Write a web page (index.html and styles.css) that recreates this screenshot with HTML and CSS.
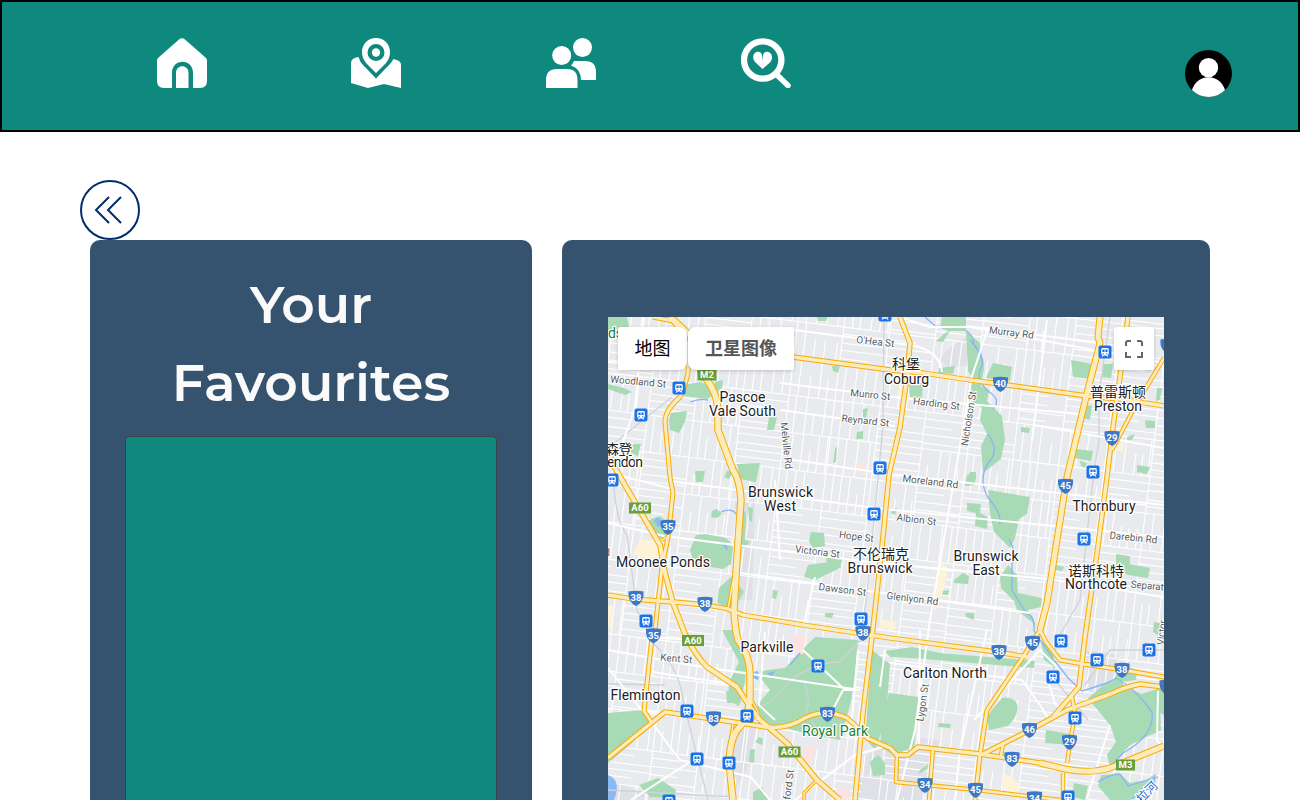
FILE: index.html
```html
<!DOCTYPE html>
<html lang="en">
<head>
<meta charset="utf-8">
<title>Your Favourites</title>
<link rel="stylesheet" href="styles.css">
</head>
<body>
<header class="navbar">
  <nav class="nav-links">
    <a class="nav-link"><svg class="nav-icon" viewBox="0 0 50 50"><path d="M22 1.500Q25-1 28 1.500L49 20Q50 21 50 22.500V43Q50 50 43 50H36V35C36 20 15 20 15 35V50H7Q0 50 0 43V22.500Q0 21 1 20Z"/><path d="M19 50V35C19 26 31.500 26 31.500 35V50Z"/></svg></a>
    <a class="nav-link"><svg class="nav-icon" viewBox="0 0 50 50"><path fill-rule="evenodd" d="M25 0C17 0 11 6 11 14Q11 20 15 25L25 35L35 25Q39 20 39 14C39 6 33 0 25 0ZM25 6A8.500 8.500 0 1 1 25 23A8.500 8.500 0 1 1 25 6Z"/><circle cx="25" cy="14.500" r="4.200"/><path d="M7.500 19Q9 24 12 27L25 40.500L38 27Q41 24 42.500 21L47 22.500Q50 24 50 27V50L33 46L17 50L0 45V25Q0 20 7.500 19Z"/></svg></a>
    <a class="nav-link"><svg class="nav-icon" viewBox="0 0 50 50"><circle cx="36.500" cy="9.500" r="9.500"/><circle cx="15.700" cy="17.500" r="9.500"/><path d="M0 50V42Q0 31 11 31H21Q31.500 31 31.500 42V50ZM28 23H39Q50 23 50 34V42H35Q35 31 25 27.500Q27 25.500 28 23Z"/></svg></a>
    <a class="nav-link"><svg class="nav-icon" viewBox="0 0 50 50"><circle cx="21.700" cy="22" r="18.700" fill="none" stroke="#fff" stroke-width="6.300"/><path d="M35 36L47 47.500" stroke="#fff" stroke-width="5.500" stroke-linecap="round"/><path d="M21.500 31L14 24C8 15 19 10 21 17L21.500 23L22 17C24 10 35 15 29.500 24Z"/></svg></a>
  </nav>
  <svg class="avatar" viewBox="0 0 47 47"><defs><clipPath id="disc"><circle cx="23.500" cy="23.500" r="23.500"/></clipPath></defs><circle cx="23.500" cy="23.500" r="23.500"/><g clip-path="url(#disc)" fill="#fff"><circle cx="23.500" cy="17.700" r="9.700"/><path d="M6 47C6 20.500 41 20.500 41 47Z"/></g></svg>
</header>
<main class="page">
  <svg class="back" viewBox="0 0 60 60"><circle cx="30" cy="30" r="29"/><path d="M29 17L16 30L29 43M41 17L28 30L41 43"/></svg>
  <div class="columns">
    <section class="panel favourites">
      <h1 class="title">Your Favourites</h1>
      <div class="list"></div>
    </section>
    <section class="panel map-panel">
      <div class="map">
        <svg id="map" class="map-canvas" viewBox="608 317 556 483"></svg>
        <div class="map-types"><button class="type active">地图</button><button class="type satellite">卫星图像</button></div>
        <button class="fullscreen" aria-label="Fullscreen"><svg viewBox="0 0 18 18"><path d="M1 6V3Q1 1 3 1H6M12 1H15Q17 1 17 3V6M17 12V17H12M6 17H1V12"/></svg></button>
      </div>
    </section>
  </div>
</main>
<script src="map.js"></script>
</body>
</html>
```
FILE: styles.css
```css
*{box-sizing:border-box}
body{margin:0;height:800px;overflow:hidden;background:#fff;font-family:"Noto Sans","Noto Sans CJK SC",sans-serif}
.navbar{display:flex;justify-content:space-between;height:132px;padding:36px 66px 0 155px;border:2px solid #000;background:#0f897d}
.nav-links{display:flex;gap:144.400px}
.nav-link:last-child{margin-left:.600px}
.nav-icon{display:block;width:50px;height:50px;fill:#fff}
.avatar{width:47px;height:47px;margin-top:12px}
.page{padding:48px 80px 0}
.back{display:block;width:60px;height:60px;fill:none;stroke:#002d6b;stroke-width:2}
.columns{display:flex;gap:30px;padding:0 10px}
.panel{height:560px;border-radius:10px 10px 0 0;background:#35526f}
.favourites{width:442px;padding:26px 35px 0}
.title{margin:0;padding:0 40px;color:#fafafa;font:600 52px/78px Montserrat,Inter,sans-serif;text-align:center}
.list{height:364px;margin-top:14px;border:1px solid #3a4348;border-bottom:0;border-radius:5px 5px 0 0;background:#0f897d}
.map-panel{width:648px;padding:77px 46px 0}
.map{position:relative;height:483px;overflow:hidden;background:#e8eaed}
.map-canvas{display:block;width:556px;height:483px}
.map-types{position:absolute;left:10px;top:10px;display:flex;gap:1px}
.type{height:43px;padding:0 0 3px;border:0;background:#fff;box-shadow:0 1px 4px -1px rgba(0,0,0,.3);font:18px "Noto Sans CJK SC",sans-serif}
.active{width:69px;border-radius:2px 8px 8px 2px;color:#000}
.satellite{width:106px;border-radius:8px 2px 2px 8px;color:#565656;font-weight:700}
.fullscreen{position:absolute;right:10px;top:10px;display:flex;align-items:center;justify-content:center;width:40px;height:43px;padding:0;border:0;border-radius:2px;background:#fff;box-shadow:0 1px 4px -1px rgba(0,0,0,.3)}
.fullscreen svg{width:18px;height:18px;fill:none;stroke:#666;stroke-width:2}
.map-canvas text{font-family:Roboto,"Noto Sans CJK SC",sans-serif;text-anchor:middle}
.place{font-size:14px;fill:#202124;stroke:#fff;stroke-width:2.500px;stroke-linejoin:round;paint-order:stroke}
.map-canvas .park-name{fill:#188038}
.map-canvas .water-name{font-size:12px;fill:#1a66c9}
.street-name{font-size:10px;fill:#55595d;stroke:#fff;stroke-width:2px;stroke-linejoin:round;paint-order:stroke}
.badge{font-size:9.500px;font-weight:700;fill:#fff}
.park{fill:#a8dab5}
.zone{fill:#dfe1e6}
.shops{fill:#fdf3d8}
.medical{fill:#fbe3e1}
.lake{fill:#8ab9f8}
.creek{fill:none;stroke:#8ab4f8;stroke-width:1.300}
.rail{fill:none;stroke:#cfd2d7;stroke-width:1.300}
.minor{fill:none;stroke:#fff;stroke-width:1.100}
.collector{fill:none;stroke:#fff;stroke-width:2;stroke-linejoin:round}
.casing{fill:none;stroke:#f9ab00;stroke-linejoin:round}
.road{fill:none;stroke:#fdebb8;stroke-linejoin:round}
```
FILE: map.js
```js
const svg = document.getElementById('map');
let out = '';
const draw = (cls, list, close) => list.forEach(p => out += `<path class="${cls}" d="M${p}${close ? 'Z' : ''}"/>`);

draw('zone', [
  '945 352L966 337L970 365L950 368L940 360', '735 500L755 500L752 600L739 600', '890 735L940 740L925 800L855 800L865 758',
  '733 720L757 725L747 770L735 790L728 765', '1085 650L1118 655L1108 700L1090 695', '608 780L650 795L670 800L608 800'
], true);

// Residential blocks: each cell is filled with closely spaced lanes in one direction.
let seed = 11;
const rnd = () => (seed = (seed * 16807) % 2147483647) / 2147483647;
let lanes = '';
for (let y = 260; y < 880; y += 37) {
  for (let x = 540; x < 1240; x += 46) {
    const vertical = x < 1010 ? rnd() < 0.68 : rnd() < 0.25;
    lanes += `M${x} ${y}h46M${x} ${y}v37`;
    if (vertical) for (let i = 7 + rnd() * 2; i < 45; i += 7 + rnd() * 5) lanes += `M${x + i} ${y + (rnd() < .3 ? 16 : 0)}V${y + 37}`;
    else for (let i = 7; i < 36; i += 6.5 + rnd() * 3) lanes += `M${x} ${y + i}h${rnd() < .25 ? 28 : 46}`;
  }
}
out += `<path class="minor" transform="rotate(7 886 558)" d="${lanes}"/>`;

draw('park', [
  '608 317L627 317L629 327L608 333', '608 384L624 388L632 392L625 395L608 389', '628 444L641 444L638 456L629 452',
  '671 413L687 411L685 422L679 433L670 430L669 420', '683 385L700 382L720 390L707 399L684 396', '715 382L723 380L722 388L714 392',
  '737 464L760 463L756 482L740 479', '769 417L777 417L774 430L767 430', '695 471L705 471L703 482L696 482', '727 471L733 471L729 479L724 477',
  '748 507L753 508L752 522L749 520', '712 511L717 509L722 514L717 518L711 517', '743 513L746 511L745 540L750 542L744 548L739 547',
  '651 519L660 516L666 521L671 536L661 540L648 522', '696 535L705 534L726 538L733 545L731 564L723 569L694 564L690 550',
  '719 588L732 576L740 587L744 592L737 604L727 607L717 603', '811 532L824 533L825 546L813 548L809 541',
  '808 565L830 562L843 559L838 569L815 580L804 577', '826 557L840 560L841 568L827 564', '825 613L834 613L832 618L825 617', '773 590L778 591L776 599L772 598',
  '817 317L828 317L826 321L818 321', '832 366L840 365L838 373L833 371', '863 409L868 408L866 418L863 417', '857 432L863 431L863 439L856 439', '837 446L836 462L833 463L835 449',
  '939 368L955 366L953 374L938 373', '909 383L923 383L922 398L910 397', '942 317L966 317L966 331L948 331L940 327',
  '945 333L950 331L943 342L936 341', '966 331L980 343L984 369L980 389L968 371', '993 363L1012 367L1010 381L986 378',
  '970 381L989 390L987 401L1002 416L1005 440L1001 459L983 473L981 446L987 434L980 420L982 408L973 402', '970 472L976 472L976 479L968 477', '1021 427L1030 428L1029 433L1021 432',
  '1071 360L1092 364L1090 379L1073 377', '1103 364L1113 364L1111 378L1102 377', '1075 449L1093 451L1091 461L1074 458', '1080 461L1087 463L1085 468L1081 466',
  '1145 420L1155 421L1155 428L1146 428', '1137 465L1150 467L1147 474L1137 472', '1127 437L1135 434L1132 440L1127 440', '1086 405L1092 406L1090 420L1083 418', '1157 388L1162 388L1160 400L1156 401',
  '967 475L976 473L975 485L965 486', '988 490L1030 497L1027 514L1019 519L1015 538L1010 548L994 532L990 513', '967 503L981 504L980 513L988 517L987 529L975 526L976 513L967 511',
  '954 580L963 573L969 576L968 584L954 583', '965 613L974 613L974 620L966 617', '942 591L949 590L948 595L943 595', '892 510L897 508L895 515L891 513', '1056 565L1064 567L1062 571L1056 570',
  '1008 565L1017 575L1018 593L1042 598L1041 607L1028 610L1036 625L1028 619L1017 610L1014 601L1001 588L1000 577', '1116 554L1130 556L1130 564L1150 568L1148 578L1128 575L1116 568', '1154 622L1161 623L1158 635L1153 632',
  '760 671L785 668L795 657L815 637L858 640L855 675L851 702L840 740L800 732L762 722L757 705L770 690L762 680', '872 650L890 664L886 718L875 750L865 738',
  '722 630L735 630L747 655L745 682L739 706L728 700L729 682L739 662', '726 691L739 692L741 703L727 703', '608 713L645 710L650 724L608 758', '608 758L634 734L643 726L632 743L608 763', '639 785L658 778L676 790L674 798L650 797',
  '750 750L755 749L754 763L749 762', '759 737L763 739L762 745L755 742', '870 762L878 755L885 763L885 775L873 776', '753 792L762 787L768 800L753 800',
  '889 693L919 697L914 747L894 755L880 747L882 720', '885 651L912 647L940 653L1035 661L1034 668L912 658L890 657', '1002 698C1022 695 1021 714 1008 726L989 730L987 716',
  '1046 730L1075 735L1072 745L1045 743', '1088 698L1105 684L1120 679L1126 688L1145 695L1160 700L1161 730L1130 745L1110 767L1107 755L1116 742L1110 725', '1120 664L1137 670L1136 680L1113 683',
  '1138 695L1164 687L1164 715L1155 710', '1101 775L1120 774L1130 783L1146 780L1156 774L1155 786L1130 800L1110 800L1098 786', '939 723L951 724L950 728L938 727', '1074 783L1088 786L1085 800L1072 797', '1041 640L1052 650L1056 668L1044 660', '920 770L929 764L926 770L918 774'
], true);
draw('shops', [
  '640 539L656 541L661 561L633 555', '893 370L905 377L904 397L898 397L899 384L891 378', '938 560L948 568L945 585L936 612L932 607L936 580',
  '880 620L896 621L895 630L880 628', '1118 445L1124 442L1123 452L1117 450', '1004 774L1012 777L1020 785L1018 796L1003 793', '608 605L613 605L611 628L608 628', '912 781L928 784L926 788L912 786'
], true);
draw('medical', ['858 463L866 464L864 470L857 469', '792 635L806 634L803 655L790 649', '804 748L817 744L812 763L806 768L802 760', '837 787L850 790L850 800L838 797'], true);
draw('lake', ['654 521Q659 513 662 526L658 527', '721 542Q729 544 727 551', '754 672Q761 668 758 680L753 678', '767 673L776 671L771 677', '608 775Q622 780 614 800L608 800'], true);
draw('creek', [
  '925 317L935 326L944 328', '965 330Q974 335 974 345Q983 355 983 365', '970 340Q984 355 982 366Q974 378 988 391Q1002 400 993 409', '988 434Q998 449 992 458Q977 475 987 496Q1004 517 999 524',
  '1009 539Q1018 556 1012 564V590L1026 613Q1035 615 1034 631L1054 660L1069 679L1082 691Q1113 682 1116 678Q1135 688 1152 712Q1155 735 1123 753L1111 766', '690 402Q700 398 708 400', '721 512Q732 507 737 515', '800 653L790 665', '1098 782Q1110 774 1120 774L1128 786L1158 777M1154 775V786L1132 799'
]);
draw('rail', [
  '884 317L883 425L878 480L866 602L860 640', '608 448L672 397', '613 474Q615 520 627 535L637 610L655 645Q680 670 683 700L708 800', '1110 317L1099 395V440L1093 480L1080 600L1060 635Q1050 660 1055 680L1088 720', '763 706Q781 695 790 680Q815 662 840 662L866 634', '803 680Q812 700 806 711L820 735M1085 685L1110 650H1164', '608 684L665 685M608 790L735 797'
]);
draw('collector', [
  '608 362L688 369', '608 473L673 489', '620 450L635 408L644 317', '608 523L664 536L870 562L1048 579L1164 597', '670 481L883 509L1164 537', '740 573L890 594L1030 613', '794 330L910 345Q940 350 942 372',
  '780 383L902 398L1080 414', '780 410L895 426', '900 317L930 327H970L1095 342', '787 459L889 474L1164 505', '970 327L1164 363', '988 328L972 376L930 620L915 730L897 800', '1047 320L1032 440', '1034 425L1164 448', '608 650L690 665L860 690',
  '652 637L690 640M653 672L730 684', '608 668L652 723L680 760L751 777L770 800', '631 800L690 762M645 711L713 719', '765 632L759 705L775 720', '803 650L845 690H858M843 690L830 715', '885 650L880 687M987 630L960 750L955 800', '1048 680L1055 704L1065 711',
  '890 663L1022 680L1040 705L1048 718', '890 745L855 755L795 800', '858 650L851 730M920 630L919 745', '815 577L803 628M775 480L780 560M725 770L733 790', '974 720L1040 650L1058 668', '1158 691L1157 740L1164 750M1087 798L1110 725'
]);

// Arterial roads: [width, path]; all casings are painted before the fills so junctions merge.
const roads = [
  [5, '653 317L673 321L682 333L688 345V373Q685 387 680 397Q665 410 665 422L670 477L673 493L668 537L662 567L655 630L652 637L644 711L652 723'],
  [7.5, '670 317L692 337L701 372L707 380Q717 393 718 410V430L733 470Q740 480 741 500L737 557L734 610Q735 630 738 640Q750 655 750 675V697Q748 720 737 730Q730 740 729 763L733 800'],
  [6, '608 450L615 468L660 545L665 573L673 603L685 634Q695 655 707 667L737 687L750 707L760 720L787 743L817 780L840 800'],
  [5.3, '608 595L633 599L673 602L707 605L728 609L743 615L803 625L890 638L997 652L1027 657'], [3.5, '728 609L735 570M662 540L668 537M733 724L727 763M817 780L804 793V800M750 697L758 712L756 720'],
  [5.5, '900 317L910 343L907 377L900 427L889 475L883 537L872 637L863 713L855 800'],
  [5.3, '793 357L890 370L923 373L970 380L1000 384L1087 396L1120 399L1164 406'],
  [7, '1100 317L1098 337L1100 343L1087 393L1067 477L1047 603L1040 630'],
  [5, '1040 630L1023 657L987 710L980 755L975 800M1040 630L1046 642L1060 660L1083 664L1123 670L1164 677'],
  [5.5, '1128 317L1120 377L1113 427L1107 477L1097 553L1085 637L1079 687L1053 717'], [4.5, '1164 358L1137 403L1112 450'],
  [5.5, '1164 687L1140 684Q1125 687 1113 693L1067 710L1030 730L983 754'], [4.5, '1072 697L1075 713L1067 763M1063 773V800M1003 743L1001 756'],
  [5.5, '608 758L665 712L713 719L760 726Q785 731 805 718Q825 708 847 718Q859 728 867 738L890 748L897 755H908L918 747L980 754L1040 763'],
  [7, '1040 763L1065 769Q1090 774 1110 768L1164 746'], [4.5, '897 755L896 782L977 790L1060 800M933 748L929 800']
];
roads.forEach(([w, d]) => out += `<path class="casing" stroke-width="${w}" d="M${d}"/>`);
roads.forEach(([w, d]) => out += `<path class="road" stroke-width="${w - 2}" d="M${d}"/>`);

[[885, 315], [1105, 352], [679, 388], [641, 415], [612, 480], [880, 468], [1093, 472], [874, 514], [1084, 539], [646, 621], [861, 619], [1061, 641], [1149, 650], [1097, 660], [1053, 677], [818, 666], [687, 711], [747, 716], [1075, 718], [697, 759], [729, 763], [669, 801], [1068, 797]].forEach(([x, y]) =>
  out += `<g transform="translate(${x} ${y})"><rect x="-6.5" y="-6.5" width="13" height="13" rx="2" fill="#1a73e8"/><path fill="#fff" d="M-2.500-4H2.500Q3.800-4 3.800-2.500V2L2.500 3.200L3.500 4.500H2L1 3.500H-1L-2 4.500H-3.500L-2.500 3.200L-3.800 2V-2.500Q-3.800-4-2.500-4Z"/><path fill="#1a73e8" d="M-2.600-2.500H-.4V0H-2.600ZM.4-2.500H2.600V0H.4ZM-2.400 1.200h1.200v1.200h-1.200ZM1.200 1.200h1.200v1.200H1.200Z"/></g>`);
[[40, 1000.5, 384], [29, 1112, 438], [45, 1065.5, 486], [35, 668, 527], [38, 636, 598], [38, 705, 604], [35, 653.5, 635.5], [38, 863, 633], [45, 1032.5, 643], [38, 999, 652], [38, 1122, 670], [83, 713.5, 718.5], [83, 827.5, 714], [46, 1029.5, 730], [29, 1069.5, 742], [83, 1012, 759], [34, 925, 785], [45, 975.5, 790], [34, 1034.5, 798.5], [4, 1167, 687], ['', 1168, 346]].forEach(([n, x, y]) =>
  out += `<g transform="translate(${x} ${y})"><path fill="#3c78c8" d="M-7.500-6.500Q0-8 7.500-6.500Q8.500 4 0 8Q-8.500 4-7.500-6.500Z"/><text class="badge" y="3">${n}</text></g>`);
[['M2', 707, 375], ['A60', 640, 508], ['A60', 693, 640.5], ['A60', 789.5, 752], ['M3', 1125.5, 765]].forEach(([n, x, y]) => {
  const w = n.length > 2 ? 22 : 19;
  out += `<rect x="${x - w / 2}" y="${y - 5.5}" width="${w}" height="11" fill="#689f38"/><text class="badge" x="${x}" y="${y + 3.3}">${n}</text>`;
});
[["O'Hea St", 875, 345, 6, 38], ['Murray Rd', 1011, 336, 7, 45], ['Munro St', 870, 398, 6, 40], ['Harding St', 936, 407, 7, 47], ['Reynard St', 865, 424, 6, 48], ['Woodland St', 638, 385, 5, 56], ['Moreland Rd', 930, 485, 7, 56], ['Albion St', 916, 523, 7, 40], ['Hope St', 856, 540, 7, 35], ['Victoria St', 817, 555, 7, 45], ['Dawson St', 842, 593, 7, 48], ['Glenlyon Rd', 912, 602, 7, 52], ['Darebin Rd', 1133, 541, 6, 48], ['Separat', 1147, 589, 5, 33], ['Kent St', 676, 662, 5, 32], ['Nicholson St', 972, 419, -81, 55], ['Melville Rd', 783, 446, 84, 47], ['Lygon St', 926, 703, -82, 38], ['ford St', 792, 785, -83, 30], ['Victor', 1165, 633, -84, 25], ['d', 607, 556, 0, 6]].forEach(([t, x, y, a, w]) =>
  out += `<text class="street-name" x="${x}" y="${y}" textLength="${w}" transform="rotate(${a} ${x} ${y})">${t}</text>`);
[['科堡', 906, 369, 28], ['Coburg', 906.5, 384, 45], ['Pascoe', 742.5, 402, 46], ['Vale South', 742.5, 416, 67], ['普雷斯顿', 1118, 397, 56], ['Preston', 1118, 411, 48], ['森登', 619, 454, 27], ['endon', 625, 467, 36], ['Brunswick', 780.5, 497, 65], ['West', 780, 511, 32], ['Thornbury', 1104, 511, 63], ['不伦瑞克', 881, 559, 56], ['Brunswick', 880, 573, 65], ['Brunswick', 986, 561, 65], ['East', 986, 575, 27], ['诺斯科特', 1096, 576, 56], ['Northcote', 1096, 589, 62], ['Moonee Ponds', 663, 567, 94], ['Parkville', 767, 652, 53], ['Carlton North', 945, 678, 84], ['Flemington', 645.5, 700, 70], ['Royal Park', 835, 736, 66, 'park-name'], ['ds', 615.500, 338, 15, 'park-name']].forEach(([t, x, y, w, c = '']) =>
  out += `<text class="place ${c}" x="${x}" y="${y}" textLength="${w}">${t}</text>`);
out += '<text class="place water-name" x="1150" y="795" transform="rotate(-45 1150 795)">拉河</text>';
svg.innerHTML = out;
```
